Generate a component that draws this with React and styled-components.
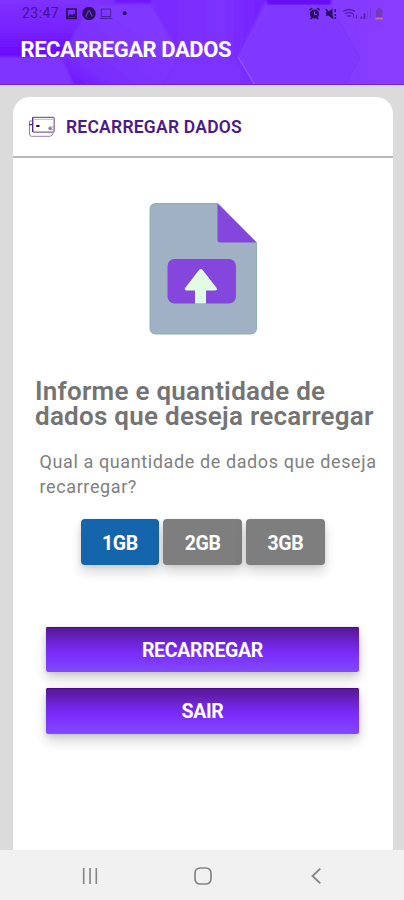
import React, { useState } from 'react';
import styled, { createGlobalStyle } from 'styled-components';

const GlobalStyle = createGlobalStyle`
  * { box-sizing: border-box; }
  body { margin: 0; background: #dbdbdb; font-family: Roboto, sans-serif; }
`;

const Screen = styled.div`
  display: flex;
  flex-direction: column;
  width: 404px;
  height: 900px;
  overflow: hidden;
  background: #dbdbdb;
`;

const Header = styled.header`
  position: relative;
  flex: none;
  height: 85px;
  overflow: hidden;
  background: #7f32ff;
`;

const Backdrop = styled.svg`
  position: absolute;
  inset: 0;
`;

const StatusBar = styled.div`
  position: relative;
  display: flex;
  align-items: center;
  height: 27px;
  padding: 0 20px 0 22px;
  color: #28105c;
`;

const Clock = styled.span`
  width: 38px;
  font-size: 14px;
  line-height: 27px;
  letter-spacing: 0.45px;
  white-space: nowrap;
  color: #43158c;
`;

const StatusIcons = styled.svg`
  flex: none;
  margin-left: ${(p) => p.$gap};
`;

const AppTitle = styled.h1`
  position: relative;
  margin: 9px 0 0 20.5px;
  font-size: 22px;
  font-weight: 700;
  line-height: 28px;
  letter-spacing: -0.43px;
  color: #fff;
`;

const Card = styled.main`
  flex: 1;
  display: flex;
  flex-direction: column;
  margin: 12px 11.5px 0 12.5px;
  background: #fff;
  border-radius: 17px 17px 0 0;
`;

const CardHeader = styled.div`
  display: flex;
  align-items: center;
  gap: 10px;
  height: 61px;
  padding: 0 0 0 15.5px;
  border-bottom: 2px solid #b8b8b8;
`;

const CardTitle = styled.h2`
  margin: 0;
  font-size: 17.5px;
  font-weight: 600;
  line-height: 24px;
  letter-spacing: 0.23px;
  color: #4b1c85;
`;

const FileArt = styled.svg`
  flex: none;
  margin: 44px 0 0 136px;
`;

const Question = styled.h3`
  margin: 43px 0 0 22.5px;
  font-size: 26px;
  font-weight: 600;
  line-height: 25px;
  letter-spacing: 0.26px;
  white-space: nowrap;
  color: #747474;
`;

const Hint = styled.p`
  margin: 20px 0 0 27px;
  font-size: 18px;
  line-height: 25px;
  letter-spacing: 0.61px;
  white-space: nowrap;
  color: #808080;
`;

const Options = styled.div`
  display: flex;
  gap: 4px;
  margin: 20px 0 0 68px;
`;

const Option = styled.button`
  width: 78.8px;
  height: 46px;
  padding: 2px 0 0;
  border: 0;
  border-radius: 4px;
  background: ${(p) => (p.$active ? '#1565ac' : '#7e7e7e')};
  box-shadow: 0 7px 12px rgba(0, 0, 0, 0.16), 0 1px 4px rgba(0, 0, 0, 0.1);
  font: 700 19.5px Roboto, sans-serif;
  letter-spacing: -0.3px;
  color: #fff;
`;

const Actions = styled.div`
  display: flex;
  flex-direction: column;
  gap: 16px;
  margin: 61.5px 33.5px 0 33.5px;
`;

const ActionButton = styled.button`
  height: 45.5px;
  padding: 2px 0 0;
  border: 0;
  border-radius: 2px;
  background: linear-gradient(#581795 0%, #5e1caa 14%, #6d24d4 34%, #7b2dff 60%, #7d38fb 75%, #8349ff 100%);
  box-shadow: inset 0 1px 0 #460b80, 0 7px 12px rgba(0, 0, 0, 0.17), 0 1px 5px rgba(0, 0, 0, 0.12);
  font: 700 19.5px Roboto, sans-serif;
  letter-spacing: -0.3px;
  color: #fff;
`;

const NavBar = styled.nav`
  flex: none;
  display: flex;
  align-items: center;
  height: 50px;
  padding: 1px 0 0 78px;
  gap: 89px;
  background: #f1f1f1;
`;

function HexBackdrop() {
  return (
    <Backdrop width="404" height="85" viewBox="0 0 404 85">
      <defs>
        <linearGradient id="base" x1="0" y1="0" x2="1" y2="0">
          <stop offset="0" stopColor="#7427ff" />
          <stop offset="0.5" stopColor="#7f34ff" />
          <stop offset="1" stopColor="#883dff" />
        </linearGradient>
        <linearGradient id="corner" x1="0" y1="0" x2="0" y2="1">
          <stop offset="0" stopColor="#8034ff" />
          <stop offset="0.6" stopColor="#7620ff" />
          <stop offset="1" stopColor="#6a08fa" />
        </linearGradient>
        <linearGradient id="leftHex" x1="0" y1="1" x2="0.7" y2="0.3">
          <stop offset="0" stopColor="#6a0eff" />
          <stop offset="0.35" stopColor="#7a2dfd" />
          <stop offset="1" stopColor="#8038ff" />
        </linearGradient>
        <linearGradient id="middle" x1="0" y1="0" x2="1" y2="0">
          <stop offset="0" stopColor="#792aff" />
          <stop offset="0.6" stopColor="#7d31ff" />
          <stop offset="1" stopColor="#741fff" />
        </linearGradient>
        <filter id="soft" x="-10%" y="-10%" width="120%" height="120%">
          <feGaussianBlur stdDeviation="1.2" />
        </filter>
      </defs>
      <rect width="404" height="85" fill="url(#base)" />
      <g filter="url(#soft)">
        <path d="M-4-4h112L74 40 61 57H-4z" fill="url(#corner)" />
        <path d="M74 89 61 57 90 5h61l28 48-18 36z" fill="url(#leftHex)" />
        <path d="M115-4h37l-1 7h-36z" fill="#7015fa" />
        <path d="M152-4h116L238 57l17 32h-93l17-36-28-48z" fill="url(#middle)" />
        <path d="m165 84 14-29 20-6 38 12 14 24z" fill="#8036ff" opacity=".5" />
        <path d="M265-4h66v9h-63z" fill="#6608f5" />
        <path d="M-4 57h65l15 32H-4z" fill="#8036ff" />
      </g>
      <path d="M268 5 238 57l17 28h90l15-27-30-53z" fill="#8038ff" />
      <path d="m268 5-30 52" fill="none" stroke="#863fff" strokeWidth="1" />
      <path d="m238 57 17 28" fill="none" stroke="#9453ff" strokeWidth="1.3" />
      <path d="m330 5 30 53-15 27" fill="none" stroke="#7c34fc" strokeWidth="1" />
      <path d="M0 84.5h404" stroke="#7026dc" />
    </Backdrop>
  );
}

function StatusLeft() {
  return (
    <StatusIcons $gap="5px" width="64" height="14" viewBox="0 0 64 14">
      <path d="M2 2h9v9.3h-9z" fill="none" stroke="currentColor" strokeWidth="1.7" />
      <path d="m2.5 10 2.7-3.2 2 1.8L9 6l2 4z" fill="currentColor" />
      <circle cx="24" cy="6.4" r="6.7" fill="currentColor" />
      <path d="m20.8 9.5 2.6-5.5h1.2l2.6 5.5" fill="none" stroke="#6430c8" strokeWidth="1.3" />
      <path d="M36.3 2h9.4v7.6h-9.4zM34.7 11.4h12.8" fill="none" stroke="currentColor" strokeOpacity=".6" strokeWidth="1" />
      <circle cx="59.7" cy="6.2" r="2" fill="currentColor" />
    </StatusIcons>
  );
}

function StatusRight() {
  return (
    <StatusIcons $gap="auto" width="75" height="14" viewBox="0 0 75 14">
      <circle cx="5.5" cy="7" r="4.6" fill="currentColor" />
      <path d="M.7 3.2 3 1M8.2 1l2.3 2.2M1.7 12l1.2-1.2M9.3 12 8 10.8" stroke="currentColor" strokeWidth="1.7" />
      <path d="M5.5 4.5v3H8" fill="none" stroke="#8140e8" strokeWidth="1" />
      <path d="M17 4.8h2.5l4-3v10l-4-3H17z" fill="currentColor" />
      <path d="m16.8 2 7.5 9.5M26.3 2v3M26.3 7v2M26.3 10v2" stroke="currentColor" strokeWidth="1.4" />
      <path d="M34 4.5q6-4 12 0M36 7q4-3 8 0M38 9.4q2-1.4 4 0" fill="none" stroke="#5520ab" strokeWidth="1.5" />
      <path d="M44.5 7v4M47.5 8v4" stroke="#5520ab" strokeWidth="1" />
      <path d="M52.5 9.5v2.5M55.5 6.5V12" stroke="#5420a8" strokeWidth="1.7" />
      <path d="M58.5 4v8M61.5 2v10" stroke="#7338df" strokeWidth="1" />
      <rect x="67" y="2.5" width="6.5" height="8" rx="1" fill="#743ab8" />
      <path d="M68.7 1.8h3" stroke="#693aab" />
      <path d="M66.3 11.5h7.6" stroke="#c9709c" strokeWidth="1.8" />
    </StatusIcons>
  );
}

function WalletIcon() {
  return (
    <svg width="28" height="22" viewBox="0 0 28 22" fill="none" stroke="#806694">
      <path d="M5 1.3h20q1.2 0 1.2 1.2v12.4q0 1.2-1.2 1.2H5" strokeWidth="1.2" />
      <path d="M4.7 1.3v14.8" stroke="#542b80" strokeWidth="1.4" />
      <path d="M5 3.3h21" stroke="#c5b5d0" />
      <path d="M4.3 5H1.5v13q0 2.3 2 2.3H22q2 0 3.5-3.6" strokeWidth="1" stroke="#9782a8" />
      <path d="M1 8.6h3" stroke="#542b80" strokeWidth="1.4" />
      <path d="M8.2 10h3.3" stroke="#27084c" strokeWidth="2" />
      <path d="M26 11h-4.3q-1.2 0-1.2 1.3t1.2 1.3H26" stroke="#a593b3" />
      <circle cx="22.3" cy="12.4" r=".8" fill="#77558f" />
    </svg>
  );
}

function UploadFile() {
  return (
    <FileArt width="110" height="134" viewBox="0 0 110 134">
      <path d="M7 1.5h62l38.5 39V126q0 6-6 6H7q-6 0-6-6V7.5q0-6 6-6z" fill="#9fb1c2" stroke="#8fb0b1" strokeWidth="1" />
      <path d="M68.5 1.5V38q0 2.5 2.5 2.5h36.5z" fill="#8446dc" />
      <rect x="18.5" y="57" width="68.5" height="44.5" rx="7" fill="#8446dc" />
      <path d="M46 101.5V88.5h-8q-3.4 0-1.5-3L49.8 68.3q2-2.4 4 0L67.3 85.5q2 3-1.4 3h-8.9v13z" fill="#e1fbe4" />
    </FileArt>
  );
}

function NavIcons() {
  return (
    <>
      <svg width="24" height="24" viewBox="0 0 24 24" stroke="#858585" strokeWidth="1.6">
        <path d="M5.7 4v16M12 4v16M18.3 4v16" />
      </svg>
      <svg width="24" height="24" viewBox="0 0 24 24" fill="none" stroke="#858585" strokeWidth="1.7">
        <rect x="4" y="4" width="16" height="16" rx="5" />
      </svg>
      <svg width="24" height="24" viewBox="0 0 24 24" fill="none" stroke="#858585" strokeWidth="1.8">
        <path d="m16.3 4.6-7.8 7.4 7.8 7.4" />
      </svg>
    </>
  );
}

export default function App() {
  const [amount, setAmount] = useState('1GB');
  return (
    <>
      <GlobalStyle />
      <Screen>
        <Header>
          <HexBackdrop />
          <StatusBar>
            <Clock>23:47</Clock>
            <StatusLeft />
            <StatusRight />
          </StatusBar>
          <AppTitle>RECARREGAR DADOS</AppTitle>
        </Header>
        <Card>
          <CardHeader>
            <WalletIcon />
            <CardTitle>RECARREGAR DADOS</CardTitle>
          </CardHeader>
          <UploadFile />
          <Question>
            Informe e quantidade de
            <br />
            dados que deseja recarregar
          </Question>
          <Hint>
            Qual a quantidade de dados que deseja
            <br />
            recarregar?
          </Hint>
          <Options>
            {['1GB', '2GB', '3GB'].map((size) => (
              <Option key={size} $active={size === amount} onClick={() => setAmount(size)}>
                {size}
              </Option>
            ))}
          </Options>
          <Actions>
            <ActionButton>RECARREGAR</ActionButton>
            <ActionButton>SAIR</ActionButton>
          </Actions>
        </Card>
        <NavBar>
          <NavIcons />
        </NavBar>
      </Screen>
    </>
  );
}
